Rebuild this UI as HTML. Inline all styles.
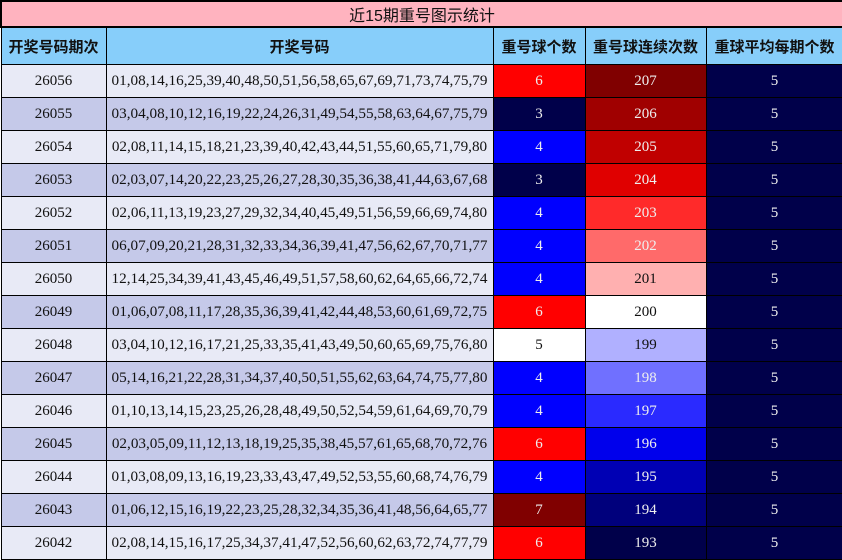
<!DOCTYPE html><html><head><meta charset="utf-8"><style>
body{margin:0;background:#fff;width:842px;height:559px;overflow:hidden}
table{border-collapse:collapse;table-layout:fixed;width:842px;position:absolute;left:0;top:0}
td{border:1px solid #000;text-align:center;padding:0;font-family:"Liberation Serif","Noto Serif CJK SC",serif;font-size:15px;height:32px;color:#111;white-space:nowrap;overflow:hidden}
tr.t td{height:24px;background:#ffb3bf;font-family:"Liberation Sans","Noto Sans CJK SC",sans-serif;font-size:16px;border:2px solid #000}
tr.h td{height:36px;background:#87cefa;font-family:"Liberation Sans","Noto Sans CJK SC",sans-serif;font-weight:bold;font-size:15px;border-top:2px solid #000}
tr.o td:nth-child(-n+2){background:#e8eaf6}
tr.e td:nth-child(-n+2){background:#c5c9e9}
.w{color:#eee}
td.n{font-size:15.2px}
</style></head><body><table>
<colgroup><col style="width:105px"><col style="width:387px"><col style="width:92px"><col style="width:121px"><col style="width:137px"></colgroup>
<tr class="t"><td colspan="5">近15期重号图示统计</td></tr>
<tr class="h"><td>开奖号码期次</td><td>开奖号码</td><td>重号球个数</td><td>重号球连续次数</td><td>重球平均每期个数</td></tr>
<tr class="o"><td>26056</td><td class="n">01,08,14,16,25,39,40,48,50,51,56,58,65,67,69,71,73,74,75,79</td><td class="w" style="background:#f00">6</td><td class="w" style="background:#800000">207</td><td class="w" style="background:#00004a">5</td></tr>
<tr class="e"><td>26055</td><td class="n">03,04,08,10,12,16,19,22,24,26,31,49,54,55,58,63,64,67,75,79</td><td class="w" style="background:#00004a">3</td><td class="w" style="background:#a00000">206</td><td class="w" style="background:#00004a">5</td></tr>
<tr class="o"><td>26054</td><td class="n">02,08,11,14,15,18,21,23,39,40,42,43,44,51,55,60,65,71,79,80</td><td class="w" style="background:#00f">4</td><td class="w" style="background:#c00000">205</td><td class="w" style="background:#00004a">5</td></tr>
<tr class="e"><td>26053</td><td class="n">02,03,07,14,20,22,23,25,26,27,28,30,35,36,38,41,44,63,67,68</td><td class="w" style="background:#00004a">3</td><td class="w" style="background:#e00000">204</td><td class="w" style="background:#00004a">5</td></tr>
<tr class="o"><td>26052</td><td class="n">02,06,11,13,19,23,27,29,32,34,40,45,49,51,56,59,66,69,74,80</td><td class="w" style="background:#00f">4</td><td class="w" style="background:#ff2a2a">203</td><td class="w" style="background:#00004a">5</td></tr>
<tr class="e"><td>26051</td><td class="n">06,07,09,20,21,28,31,32,33,34,36,39,41,47,56,62,67,70,71,77</td><td class="w" style="background:#00f">4</td><td class="w" style="background:#ff6a6a">202</td><td class="w" style="background:#00004a">5</td></tr>
<tr class="o"><td>26050</td><td class="n">12,14,25,34,39,41,43,45,46,49,51,57,58,60,62,64,65,66,72,74</td><td class="w" style="background:#00f">4</td><td style="background:#ffb0b0">201</td><td class="w" style="background:#00004a">5</td></tr>
<tr class="e"><td>26049</td><td class="n">01,06,07,08,11,17,28,35,36,39,41,42,44,48,53,60,61,69,72,75</td><td class="w" style="background:#f00">6</td><td style="background:#fff">200</td><td class="w" style="background:#00004a">5</td></tr>
<tr class="o"><td>26048</td><td class="n">03,04,10,12,16,17,21,25,33,35,41,43,49,50,60,65,69,75,76,80</td><td style="background:#fff">5</td><td style="background:#b0b0ff">199</td><td class="w" style="background:#00004a">5</td></tr>
<tr class="e"><td>26047</td><td class="n">05,14,16,21,22,28,31,34,37,40,50,51,55,62,63,64,74,75,77,80</td><td class="w" style="background:#00f">4</td><td class="w" style="background:#7070ff">198</td><td class="w" style="background:#00004a">5</td></tr>
<tr class="o"><td>26046</td><td class="n">01,10,13,14,15,23,25,26,28,48,49,50,52,54,59,61,64,69,70,79</td><td class="w" style="background:#00f">4</td><td class="w" style="background:#2a2aff">197</td><td class="w" style="background:#00004a">5</td></tr>
<tr class="e"><td>26045</td><td class="n">02,03,05,09,11,12,13,18,19,25,35,38,45,57,61,65,68,70,72,76</td><td class="w" style="background:#f00">6</td><td class="w" style="background:#0000ec">196</td><td class="w" style="background:#00004a">5</td></tr>
<tr class="o"><td>26044</td><td class="n">01,03,08,09,13,16,19,23,33,43,47,49,52,53,55,60,68,74,76,79</td><td class="w" style="background:#00f">4</td><td class="w" style="background:#0000b4">195</td><td class="w" style="background:#00004a">5</td></tr>
<tr class="e"><td>26043</td><td class="n">01,06,12,15,16,19,22,23,25,28,32,34,35,36,41,48,56,64,65,77</td><td class="w" style="background:#800000">7</td><td class="w" style="background:#00007c">194</td><td class="w" style="background:#00004a">5</td></tr>
<tr class="o"><td>26042</td><td class="n">02,08,14,15,16,17,25,34,37,41,47,52,56,60,62,63,72,74,77,79</td><td class="w" style="background:#f00">6</td><td class="w" style="background:#00004a">193</td><td class="w" style="background:#00004a">5</td></tr>
</table></body></html>
